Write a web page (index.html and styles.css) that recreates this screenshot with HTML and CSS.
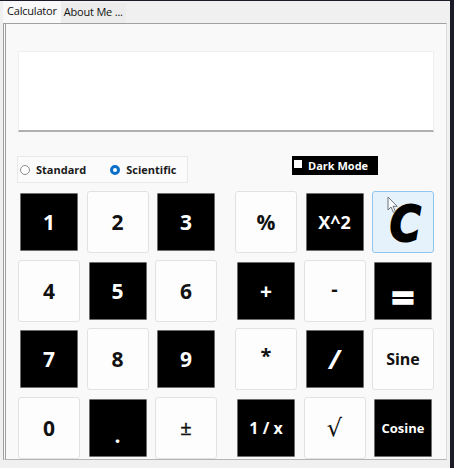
FILE: index.html
```html
<!DOCTYPE html>
<html>
<head>
<meta charset="utf-8">
<link rel="stylesheet" href="styles.css">
</head>
<body>
<div class="window">
  <div class="tabs">
    <div class="tab active">Calculator</div>
    <div class="tab">About Me ...</div>
  </div>
  <div class="panel">
    <div class="display"></div>
    <div class="options">
      <div class="radio-group">
        <label class="radio"><span class="dot"></span>Standard</label>
        <label class="radio checked"><span class="dot"></span>Scientific</label>
      </div>
      <div class="darkmode"><span class="box"></span>Dark Mode</div>
    </div>
    <div class="keys">
      <div class="grid">
        <div class="key dark">1</div>
        <div class="key">2</div>
        <div class="key dark">3</div>
        <div class="key">4</div>
        <div class="key dark">5</div>
        <div class="key">6</div>
        <div class="key dark">7</div>
        <div class="key">8</div>
        <div class="key dark">9</div>
        <div class="key">0</div>
        <div class="key dark dotkey">.</div>
        <div class="key pm">±</div>
      </div>
      <div class="grid">
        <div class="key">%</div>
        <div class="key dark sq">X^2</div>
        <div class="key clear"><span class="cglyph">C</span>
          <svg class="cursor" width="12" height="18" viewBox="0 0 12 18"><path d="M1 1 L1 14 L4 11 L6.5 16.5 L8.5 15.6 L6 10.3 L10.2 10.3 Z" fill="#fff" stroke="#555" stroke-width="1"/></svg>
        </div>
        <div class="key dark">+</div>
        <div class="key minus">-</div>
        <div class="key dark eq">=</div>
        <div class="key star">*</div>
        <div class="key dark slash">/</div>
        <div class="key word">Sine</div>
        <div class="key dark inv">1 / x</div>
        <div class="key sqrt">√</div>
        <div class="key dark cos">Cosine</div>
      </div>
    </div>
  </div>
</div>
</body>
</html>
```
FILE: styles.css
```css
* { box-sizing: border-box; }
html, body { margin: 0; padding: 0; }
body {
  width: 454px;
  height: 468px;
  overflow: hidden;
  background: #f0f0f0;
  font-family: "Open Sans", "Noto Sans", sans-serif;
}
.window {
  width: 454px;
  height: 468px;
  border-top: 1px solid #1c1c28;
  border-right: 4px solid #1c1c28;
  background: #f0f0f0;
  padding-left: 3px;
}
.tabs {
  display: flex;
  align-items: flex-end;
  height: 22px;
}
.tab {
  font-size: 11px;
  letter-spacing: -0.2px;
  color: #111;
  height: 20px;
  line-height: 18px;
  padding: 0 3px;
  background: #ececec;
}
.tab.active {
  height: 22px;
  line-height: 20px;
  background: #f9f9f9;
  padding: 0 4px 0 4px;
}
.panel {
  width: 444px;
  height: 437px;
  background: #f9f9f9;
  border-top: 1px solid #a0a0a0;
  border-left: 3px double #a0a0a0;
  border-right: 1px solid #dcdcdc;
  border-bottom: 1px solid #b4b4b4;
  padding: 27px 0 0 12px;
  overflow: hidden;
}
.display {
  width: 416px;
  height: 81px;
  background: #fff;
  border: 1px solid #efefef;
  border-bottom: 2px solid #b0b0b0;
}
.options {
  display: flex;
  align-items: flex-start;
  margin-top: 24px;
}
.radio-group {
  margin-left: -1px;
  width: 171px;
  height: 27px;
  background: #fbfbfb;
  border: 1px solid #e8e8e8;
  display: flex;
  align-items: center;
  padding-left: 2px;
}
.radio {
  display: flex;
  align-items: center;
  font-size: 11px;
  font-weight: 700;
  color: #1a1a1a;
}
.radio + .radio { margin-left: 24px; }
.dot {
  width: 10px;
  height: 10px;
  border-radius: 50%;
  border: 1px solid #8c8c8c;
  background: #fff;
  margin-right: 6px;
}
.radio.checked .dot {
  border: 3px solid #0b6fc9;
}
.darkmode {
  margin-left: 104px;
  height: 19px;
  width: 86px;
  background: #000;
  color: #fff;
  font-size: 11px;
  font-weight: 700;
  display: flex;
  align-items: center;
  padding-left: 2px;
}
.darkmode .box {
  width: 8px;
  height: 8px;
  background: #fff;
  margin-right: 6px;
  margin-top: -3px;
}
.keys {
  display: flex;
  gap: 18px;
  margin-top: 8px;
}
.grid {
  display: grid;
  grid-template-columns: repeat(3, 62px);
  grid-auto-rows: 62px;
  gap: 6.5px;
}
.key {
  position: relative;
  background: #fdfdfd;
  border: 1px solid #e2e2e2;
  border-radius: 3px;
  display: flex;
  align-items: center;
  justify-content: center;
  font-size: 21px;
  font-weight: 700;
  color: #111;
}
.key.dark {
  margin: 2px;
  background: #000;
  border: 1px solid #6e6e6e;
  border-radius: 1px;
  color: #fff;
}
.dotkey { padding-top: 14px; }
.pm { font-size: 20px; font-weight: 400; -webkit-text-stroke: 0.4px #111; }
.sq { font-size: 18px; }
.minus { font-size: 20px; padding-bottom: 4px; }
.eq { font-size: 40px; -webkit-text-stroke: 1.6px #fff; padding-top: 12px; }
.star { font-size: 20px; padding-bottom: 8px; }
.slash { font-size: 26px; font-style: italic; }
.word { font-size: 16px; }
.inv { font-size: 16px; }
.cos { font-size: 13px; }
.sqrt { font-size: 24px; font-weight: 400; font-family: "DejaVu Sans", sans-serif; }
.clear {
  background: #e5f1fb;
  border: 1px solid #8fc6ee;
  overflow: hidden;
}
.cglyph {
  font-family: "DejaVu Sans", sans-serif;
  font-size: 50px;
  font-weight: 700;
  font-style: italic;
  -webkit-text-stroke: 2px #000;
  color: #000;
  transform: scaleX(0.85);
  margin-left: 4px;
  margin-top: 4px;
}
.cursor {
  position: absolute;
  left: 14px;
  top: 4px;
  opacity: 0.8;
}
```
